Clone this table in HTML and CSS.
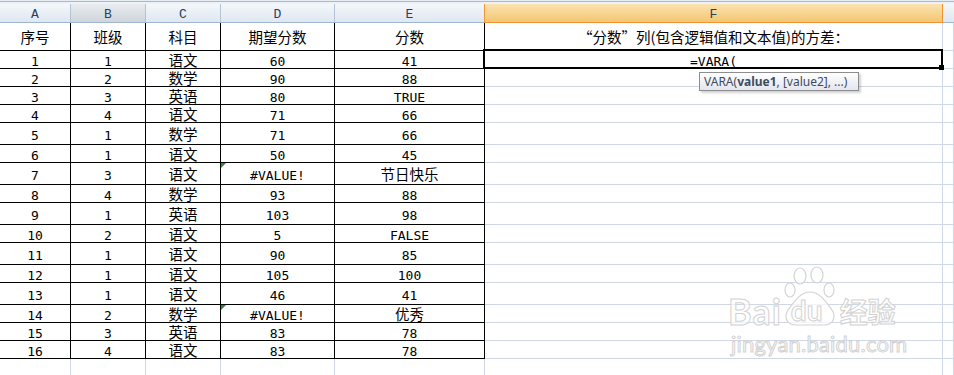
FILE: index.html
```html
<!DOCTYPE html>
<html lang="zh-CN">
<head>
<meta charset="utf-8">
<title>VARA</title>
<link rel="stylesheet" href="styles.css">
</head>
<body>
<div class="sheet">
  <div class="topbar"></div>
  <div class="row colhead">
    <div class="ch">A</div><div class="ch hov">B</div><div class="ch">C</div><div class="ch">D</div><div class="ch">E</div><div class="ch sel">F</div><div class="ch last"></div>
  </div>
  <div class="row title">
    <div class="c t">序号</div><div class="c t">班级</div><div class="c t">科目</div><div class="c t">期望分数</div><div class="c t">分数</div><div class="c g t">“分数”列(包含逻辑值和文本值)的方差：</div><div class="c g"></div>
  </div>
  <div class="row r18"><div class="c n">1</div><div class="c n">1</div><div class="c t">语文</div><div class="c n">60</div><div class="c n">41</div><div class="c g n active">=VARA(</div><div class="c g"></div></div>
  <div class="row r18"><div class="c n">2</div><div class="c n">2</div><div class="c t">数学</div><div class="c n">90</div><div class="c n">88</div><div class="c g"></div><div class="c g"></div></div>
  <div class="row r18"><div class="c n">3</div><div class="c n">3</div><div class="c t">英语</div><div class="c n">80</div><div class="c n">TRUE</div><div class="c g"></div><div class="c g"></div></div>
  <div class="row r18"><div class="c n">4</div><div class="c n">4</div><div class="c t">语文</div><div class="c n">71</div><div class="c n">66</div><div class="c g"></div><div class="c g"></div></div>
  <div class="row r22"><div class="c n">5</div><div class="c n">1</div><div class="c t">数学</div><div class="c n">71</div><div class="c n">66</div><div class="c g"></div><div class="c g"></div></div>
  <div class="row r18"><div class="c n">6</div><div class="c n">1</div><div class="c t">语文</div><div class="c n">50</div><div class="c n">45</div><div class="c g"></div><div class="c g"></div></div>
  <div class="row r22"><div class="c n">7</div><div class="c n">3</div><div class="c t">语文</div><div class="c n err">#VALUE!</div><div class="c t">节日快乐</div><div class="c g"></div><div class="c g"></div></div>
  <div class="row r18"><div class="c n">8</div><div class="c n">4</div><div class="c t">数学</div><div class="c n">93</div><div class="c n">88</div><div class="c g"></div><div class="c g"></div></div>
  <div class="row r22"><div class="c n">9</div><div class="c n">1</div><div class="c t">英语</div><div class="c n">103</div><div class="c n">98</div><div class="c g"></div><div class="c g"></div></div>
  <div class="row r18"><div class="c n">10</div><div class="c n">2</div><div class="c t">语文</div><div class="c n">5</div><div class="c n">FALSE</div><div class="c g"></div><div class="c g"></div></div>
  <div class="row r22"><div class="c n">11</div><div class="c n">1</div><div class="c t">语文</div><div class="c n">90</div><div class="c n">85</div><div class="c g"></div><div class="c g"></div></div>
  <div class="row r18"><div class="c n">12</div><div class="c n">1</div><div class="c t">语文</div><div class="c n">105</div><div class="c n">100</div><div class="c g"></div><div class="c g"></div></div>
  <div class="row r22"><div class="c n">13</div><div class="c n">1</div><div class="c t">语文</div><div class="c n">46</div><div class="c n">41</div><div class="c g"></div><div class="c g"></div></div>
  <div class="row r18"><div class="c n">14</div><div class="c n">2</div><div class="c t">数学</div><div class="c n err">#VALUE!</div><div class="c t">优秀</div><div class="c g"></div><div class="c g"></div></div>
  <div class="row r18"><div class="c n">15</div><div class="c n">3</div><div class="c t">英语</div><div class="c n">83</div><div class="c n">78</div><div class="c g"></div><div class="c g"></div></div>
  <div class="row r18"><div class="c n">16</div><div class="c n">4</div><div class="c t">语文</div><div class="c n">83</div><div class="c n">78</div><div class="c g"></div><div class="c g"></div></div>
  <div class="row r18 empty"><div class="c g"></div><div class="c g"></div><div class="c g"></div><div class="c g"></div><div class="c g"></div><div class="c g"></div><div class="c g"></div></div>

  <div class="tip">VARA(<b>value1</b>, [value2], ...)</div>

  <div class="mark">
    <div class="mark-top">
      <span class="wm-big">Bai</span>
      <span class="paw">
        <svg class="paw-svg" width="52" height="60" viewBox="0 0 52 60">
          <g fill="rgba(255,255,255,0.7)" stroke="#d4d4d4" stroke-width="1.2">
            <ellipse cx="16" cy="10" rx="6" ry="8"/>
            <ellipse cx="33" cy="9" rx="6" ry="8"/>
            <ellipse cx="6" cy="24" rx="5" ry="7"/>
            <ellipse cx="45" cy="24" rx="5" ry="7"/>
            <path d="M26 26 C16 26 10 36 4 44 C0 50 2 59 12 59 L40 59 C50 59 52 50 48 44 C42 36 36 26 26 26 Z"/>
          </g>
        </svg>
        <span class="wm-du">du</span>
      </span>
      <span class="wm-cn">经验</span>
    </div>
    <div class="wm-url">jingyan.baidu.com</div>
  </div>
</div>
</body>
</html>
```
FILE: styles.css
```css
html, body {
  margin: 0;
  padding: 0;
  background: #ffffff;
  overflow: hidden;
}

.sheet {
  position: relative;
  width: 954px;
  height: 375px;
  overflow: hidden;
  background: #ffffff;
}

.topbar {
  height: 4px;
  background: linear-gradient(#e6ecf3 0, #e6ecf3 1px, #a6bad3 1px, #a6bad3 2px, #eef2f7 2px, #eef2f7 4px);
}

.row {
  display: grid;
  grid-template-columns: 71px 75px 75px 114px 150px 458px 11px;
}

.colhead { height: 19px; }
.title { height: 28px; }
.r18 { height: 18px; }
.r22 { height: 22px; }

.ch {
  box-sizing: border-box;
  border-right: 1px solid #b2c3d8;
  border-bottom: 1px solid #9eb6ce;
  background: linear-gradient(#f4f7fb, #dfe7f2);
  display: flex;
  align-items: center;
  justify-content: center;
  padding-top: 3px;
  font-family: "Liberation Mono", monospace;
  font-size: 13px;
  line-height: 13px;
  color: #27405e;
}
.ch.hov {
  background: linear-gradient(#e9ecf0, #cfd5dc);
}
.ch.sel {
  background: linear-gradient(#fbe3b1, #f4c672);
  border-left: 1px solid #f29436;
  border-right: 1px solid #f29436;
  border-bottom: 1px solid #f29436;
  margin-left: -1px;
}
.ch.last { border-right: none; }

.c {
  position: relative;
  box-sizing: border-box;
  border-right: 1px solid #000;
  border-bottom: 1px solid #000;
  display: flex;
  align-items: center;
  justify-content: center;
  white-space: nowrap;
  color: #000;
}
.c.g {
  border-right-color: #d0d7e5;
  border-bottom-color: #d0d7e5;
}
.c.t {
  font-family: "Noto Sans CJK SC", sans-serif;
  font-size: 14.5px;
  line-height: 14px;
  padding-top: 1px;
}
.c.n {
  font-family: "DejaVu Sans Mono", monospace;
  font-size: 13px;
  line-height: 12px;
  padding-top: 4px;
}

.err::before {
  content: "";
  position: absolute;
  left: 0;
  top: 0;
  width: 0;
  height: 0;
  border-top: 5px solid #2c8c2c;
  border-right: 5px solid transparent;
}

.active::after {
  content: "";
  position: absolute;
  left: -2px;
  top: -2px;
  right: -1px;
  bottom: -1px;
  border: 2px solid #000;
  z-index: 2;
}
.active::before {
  content: "";
  position: absolute;
  right: -2px;
  bottom: -2px;
  width: 5px;
  height: 5px;
  background: #000;
  z-index: 3;
}

.tip {
  position: absolute;
  left: 699px;
  top: 72px;
  width: 160px;
  height: 19px;
  box-sizing: border-box;
  border: 1px solid #8d8d8d;
  background: linear-gradient(#ffffff, #e3e6ef);
  box-shadow: 2px 2px 2px rgba(0, 0, 0, 0.18);
  font-family: "Noto Sans", sans-serif;
  font-size: 12px;
  line-height: 17px;
  color: #3f4c5e;
  padding-left: 4px;
  white-space: nowrap;
  z-index: 4;
}
.tip b { font-weight: 700; }

.mark {
  position: absolute;
  left: 728px;
  top: 268px;
  width: 180px;
  display: flex;
  flex-direction: column;
  align-items: flex-start;
  font-family: "Lato", "Noto Sans CJK SC", sans-serif;
  color: rgba(255, 255, 255, 0.65);
  -webkit-text-stroke: 1px #d2d2d2;
  z-index: 5;
}
.mark-top {
  display: flex;
  align-items: flex-end;
  height: 58px;
}
.wm-big {
  font-size: 36px;
  font-weight: 700;
  line-height: 30px;
  letter-spacing: 1px;
}
.paw {
  position: relative;
  width: 52px;
  height: 60px;
  margin-left: 2px;
}
.paw-svg {
  position: absolute;
  left: 0;
  top: 0;
}
.wm-du {
  position: absolute;
  left: 7px;
  bottom: 2px;
  font-size: 28px;
  font-weight: 700;
  line-height: 28px;
}
.wm-cn {
  font-family: "Noto Sans CJK SC", sans-serif;
  font-size: 28px;
  font-weight: 700;
  line-height: 30px;
  margin-left: 4px;
}
.wm-url {
  font-size: 22px;
  line-height: 24px;
  margin-top: 6px;
  margin-left: 3px;
  letter-spacing: 0.2px;
}
```
